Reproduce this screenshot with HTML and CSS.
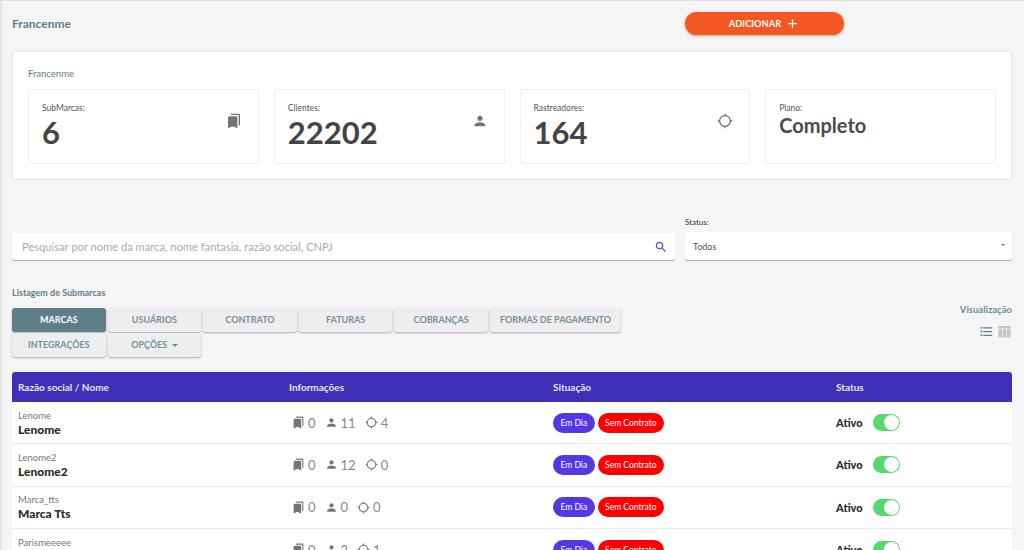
FILE: index.html
```html
<!DOCTYPE html>
<html lang="pt-BR">
<head>
	<meta charset="utf-8"/>
	<title>Francenme</title>
	<link rel="stylesheet" href="styles.css">
</head>
<body>
<svg class="defs" width="0" height="0">
	<symbol id="i-marcas" viewBox="0 0 24 24"><path d="M19 18l2 1V3c0-1.1-.9-2-2-2H8.99C7.89 1 7 1.9 7 3h10c1.1 0 2 .9 2 2v13zM15 5H5c-1.1 0-2 .9-2 2v16l7-3 7 3V7c0-1.1-.9-2-2-2z"/></symbol>
	<symbol id="i-user" viewBox="0 0 24 24"><path d="M12 12c2.21 0 4-1.79 4-4s-1.79-4-4-4-4 1.79-4 4 1.79 4 4 4zm0 2c-2.67 0-8 1.34-8 4v2h16v-2c0-2.66-5.33-4-8-4z"/></symbol>
	<symbol id="i-gps" viewBox="0 0 24 24"><path d="M20.94 11c-.46-4.17-3.77-7.48-7.94-7.94V1h-2v2.06C6.83 3.52 3.52 6.83 3.06 11H1v2h2.06c.46 4.17 3.77 7.48 7.94 7.94V23h2v-2.06c4.17-.46 7.48-3.77 7.94-7.94H23v-2h-2.06zM12 19c-3.87 0-7-3.13-7-7s3.13-7 7-7 7 3.13 7 7-3.13 7-7 7z"/></symbol>
</svg>

<header class="top">
	<h1 class="top__title">Francenme</h1>
	<a class="add-btn" href="#">ADICIONAR
		<svg class="add-btn__icon" viewBox="0 0 24 24"><path d="M19 13h-6v6h-2v-6H5v-2h6V5h2v6h6v2z"/></svg>
	</a>
</header>

<section class="summary">
	<h2 class="summary__title">Francenme</h2>
	<div class="stats">
		<div class="stat">
			<div>
				<div class="stat__label">SubMarcas:</div>
				<div class="stat__value">6</div>
			</div>
			<svg class="stat__icon"><use href="#i-marcas"/></svg>
		</div>
		<div class="stat">
			<div>
				<div class="stat__label">Clientes:</div>
				<div class="stat__value">22202</div>
			</div>
			<svg class="stat__icon"><use href="#i-user"/></svg>
		</div>
		<div class="stat">
			<div>
				<div class="stat__label">Rastreadores:</div>
				<div class="stat__value">164</div>
			</div>
			<svg class="stat__icon"><use href="#i-gps"/></svg>
		</div>
		<div class="stat">
			<div>
				<div class="stat__label">Plano:</div>
				<div class="stat__plan">Completo</div>
			</div>
		</div>
	</div>
</section>

<section class="filters">
	<div class="search">
		<span class="search__text">Pesquisar por nome da marca, nome fantasia, razão social, CNPJ</span>
		<svg class="search__icon" viewBox="0 0 24 24"><path d="M15.5 14h-.79l-.28-.27C15.41 12.59 16 11.11 16 9.5 16 5.91 13.09 3 9.5 3S3 5.91 3 9.5 5.91 16 9.5 16c1.61 0 3.09-.59 4.23-1.57l.27.28v.79l5 4.99L20.49 19l-4.99-5zm-6 0C7.01 14 5 11.99 5 9.5S7.01 5 9.5 5 14 7.01 14 9.5 11.99 14 9.5 14z"/></svg>
	</div>
	<div class="status-filter">
		<label class="status-filter__label">Status:</label>
		<div class="select">
			<span>Todos</span>
			<i class="select__caret"></i>
		</div>
	</div>
</section>

<section class="listing">
	<h3 class="listing__title">Listagem de Submarcas</h3>
	<div class="listing__bar">
		<nav class="tabs">
			<a class="tab tab_active" href="#">MARCAS</a>
			<a class="tab" href="#">USUÁRIOS</a>
			<a class="tab" href="#">CONTRATO</a>
			<a class="tab" href="#">FATURAS</a>
			<a class="tab" href="#">COBRANÇAS</a>
			<a class="tab tab_wide" href="#">FORMAS DE PAGAMENTO</a>
			<a class="tab" href="#">INTEGRAÇÕES</a>
			<a class="tab" href="#">OPÇÕES <i class="tab__caret"></i></a>
		</nav>
		<div class="view">
			<div class="view__title">Visualização</div>
			<div class="view__icons">
				<svg class="view__icon" viewBox="0 0 24 24"><path d="M4 10.5c-.83 0-1.5.67-1.5 1.5s.67 1.5 1.5 1.5 1.5-.67 1.5-1.5-.67-1.5-1.5-1.5zm0-6c-.83 0-1.5.67-1.5 1.5S3.17 7.5 4 7.5 5.5 6.83 5.5 6 4.83 4.5 4 4.5zm0 12c-.83 0-1.5.68-1.5 1.5s.68 1.5 1.5 1.5 1.5-.68 1.5-1.5-.67-1.5-1.5-1.5zM7 19h14v-2H7v2zm0-6h14v-2H7v2zm0-8v2h14V5H7z"/></svg>
				<svg class="view__icon view__icon_off" viewBox="0 0 24 24"><path d="M2 3h20v4H2zM2 8.500h6V21H2zM9 8.500h6V21H9zM16 8.500h6V21h-6z"/></svg>
			</div>
		</div>
	</div>

	<div class="table">
		<div class="table__head">
			<div>Razão social / Nome</div>
			<div>Informações</div>
			<div>Situação</div>
			<div>Status</div>
		</div>

		<div class="table__row">
			<div>
				<div class="row-sub">Lenome</div>
				<div class="row-name">Lenome</div>
			</div>
			<div class="info">
				<svg class="info__icon"><use href="#i-marcas"/></svg><span class="info__num">0</span>
				<svg class="info__icon info__icon_user"><use href="#i-user"/></svg><span class="info__num">11</span>
				<svg class="info__icon info__icon_gps"><use href="#i-gps"/></svg><span class="info__num">4</span>
			</div>
			<div class="badges"><span class="badge badge_blue">Em Dia</span><span class="badge badge_red">Sem Contrato</span></div>
			<div class="state"><strong class="state__text">Ativo</strong><span class="switch"><i class="switch__knob"></i></span></div>
		</div>

		<div class="table__row">
			<div>
				<div class="row-sub">Lenome2</div>
				<div class="row-name">Lenome2</div>
			</div>
			<div class="info">
				<svg class="info__icon"><use href="#i-marcas"/></svg><span class="info__num">0</span>
				<svg class="info__icon info__icon_user"><use href="#i-user"/></svg><span class="info__num">12</span>
				<svg class="info__icon info__icon_gps"><use href="#i-gps"/></svg><span class="info__num">0</span>
			</div>
			<div class="badges"><span class="badge badge_blue">Em Dia</span><span class="badge badge_red">Sem Contrato</span></div>
			<div class="state"><strong class="state__text">Ativo</strong><span class="switch"><i class="switch__knob"></i></span></div>
		</div>

		<div class="table__row">
			<div>
				<div class="row-sub">Marca_tts</div>
				<div class="row-name">Marca Tts</div>
			</div>
			<div class="info">
				<svg class="info__icon"><use href="#i-marcas"/></svg><span class="info__num">0</span>
				<svg class="info__icon info__icon_user"><use href="#i-user"/></svg><span class="info__num">0</span>
				<svg class="info__icon info__icon_gps"><use href="#i-gps"/></svg><span class="info__num">0</span>
			</div>
			<div class="badges"><span class="badge badge_blue">Em Dia</span><span class="badge badge_red">Sem Contrato</span></div>
			<div class="state"><strong class="state__text">Ativo</strong><span class="switch"><i class="switch__knob"></i></span></div>
		</div>

		<div class="table__row">
			<div>
				<div class="row-sub">Parismeeeee</div>
				<div class="row-name">Parismeeeee</div>
			</div>
			<div class="info">
				<svg class="info__icon"><use href="#i-marcas"/></svg><span class="info__num">0</span>
				<svg class="info__icon info__icon_user"><use href="#i-user"/></svg><span class="info__num">2</span>
				<svg class="info__icon info__icon_gps"><use href="#i-gps"/></svg><span class="info__num">1</span>
			</div>
			<div class="badges"><span class="badge badge_blue">Em Dia</span><span class="badge badge_red">Sem Contrato</span></div>
			<div class="state"><strong class="state__text">Ativo</strong><span class="switch"><i class="switch__knob"></i></span></div>
		</div>
	</div>
</section>
</body>
</html>
```

FILE: styles.css
```css
/* pagina */
html,body{
	height: 100%;
	overflow: hidden;
}
body{
	margin: 0;
	padding: 0 12px 0 10px;
	background: #f5f5f5;
	border-top: 1px solid #e2e2e2;
	border-left: 2px solid #e6e6e6;
	font-family: "Lato", "Open Sans", sans-serif;
	color: #444;
}
h1,h2,h3{
	margin: 0;
}
a{
	text-decoration: none;
}
.defs{
	position: absolute;
}

/* topo */
.top{
	display: flex;
	align-items: center;
	height: 23px;
	padding-top: 11px;
}
.top__title{
	flex: 0 0 673px;
	font-size: 12px;
	font-weight: 700;
	color: #5f7d8a;
}
.add-btn{
	display: flex;
	align-items: center;
	justify-content: center;
	gap: 4px;
	width: 159px;
	height: 23px;
	border-radius: 12px;
	background: #f55722;
	color: #fff;
	font-size: 9.3px;
	font-weight: 700;
	box-shadow: 0 1px 3px rgba(0,0,0,.3);
}
.add-btn__icon{
	width: 15px;
	height: 15px;
	fill: #fff;
}

/* resumo */
.summary{
	box-sizing: border-box;
	margin-top: 16px;
	height: 129px;
	padding: 16px 15px 0;
	background: #fff;
	border: 1px solid #e8e8e8;
	border-radius: 2px;
}
.summary__title{
	font-size: 9.5px;
	font-weight: 400;
	line-height: 12px;
	color: #5f7d8a;
}
.stats{
	display: flex;
	gap: 15px;
	margin-top: 9px;
}
.stat{
	display: flex;
	justify-content: space-between;
	flex: 1;
	box-sizing: border-box;
	height: 75px;
	padding: 13px 16px 0 13px;
	border: 1px solid #efefef;
	border-radius: 2px;
}
.stat__label{
	font-size: 8.5px;
	line-height: 10px;
	color: #555;
}
.stat__value{
	font-size: 31px;
	font-weight: 700;
	line-height: 38px;
	color: #444;
}
.stat__plan{
	font-size: 20px;
	font-weight: 700;
	line-height: 24px;
	color: #4a4a4a;
}
.stat__icon{
	width: 16px;
	height: 16px;
	margin-top: 10px;
	fill: #757575;
}

/* filtros */
.filters{
	display: flex;
	align-items: flex-end;
	gap: 10px;
	margin-top: 37px;
}
.search{
	display: flex;
	align-items: center;
	justify-content: space-between;
	flex: 0 0 663px;
	box-sizing: border-box;
	height: 27px;
	padding: 0 7px 0 10px;
	background: #fff;
	border-radius: 2px;
	box-shadow: 0 1px 1px rgba(0,0,0,.3);
	font-size: 11.15px;
	color: #aaa;
}
.search__icon{
	width: 14px;
	height: 14px;
	fill: #5b3fe0;
}
.status-filter{
	flex: 1;
}
.status-filter__label{
	display: block;
	margin-bottom: 5px;
	font-size: 8px;
	line-height: 10px;
	color: #333;
}
.select{
	display: flex;
	align-items: center;
	justify-content: space-between;
	height: 28px;
	padding: 0 7px 0 8px;
	background: #fff;
	border-radius: 2px;
	box-shadow: 0 1px 1px rgba(0,0,0,.3);
	font-size: 9px;
	color: #555;
}
.select__caret{
	margin-bottom: 3px;
	border: 2px solid transparent;
	border-top: 2px solid #777;
	border-bottom: 0;
}

/* listagem */
.listing{
	margin-top: 27px;
}
.listing__title{
	font-size: 9px;
	font-weight: 700;
	line-height: 11px;
	color: #5f7d8a;
}
.listing__bar{
	display: flex;
	justify-content: space-between;
	margin-top: 10px;
	height: 64px;
}
.tabs{
	display: flex;
	flex-wrap: wrap;
	align-content: flex-start;
	gap: 1px 2px;
	width: 620px;
}
.tab{
	box-sizing: border-box;
	flex: 0 0 93.6px;
	height: 24px;
	line-height: 23px;
	text-align: center;
	background: #eee;
	border-radius: 3px;
	box-shadow: 0 1px 2px rgba(0,0,0,.3);
	font-size: 9px;
	font-weight: 700;
	color: #76909b;
}
.tab_active{
	background: #5f7d8a;
	color: #fff;
}
.tab_wide{
	flex-basis: 131px;
}
.tab__caret{
	display: inline-block;
	margin: 0 0 1px 2px;
	border: 3px solid transparent;
	border-top: 3px solid #6f8791;
	border-bottom: 0;
}
.view{
	margin-top: -4px;
	text-align: right;
}
.view__title{
	font-size: 9.5px;
	font-weight: 700;
	line-height: 12px;
	color: #6f8f9e;
}
.view__icons{
	display: flex;
	justify-content: flex-end;
	gap: 3px;
	margin-top: 8px;
}
.view__icon{
	width: 15px;
	height: 15px;
	fill: #5f7d8a;
}
.view__icon_off{
	fill: #c4c4c4;
}

/* tabela */
.table{
	background: #fff;
}
.table__head,
.table__row{
	display: grid;
	grid-template-columns: 271px 264px 283px 1fr;
	align-items: center;
}
.table__head{
	height: 30px;
	background: #3f2eb8;
	border-radius: 3px 3px 0 0;
	font-size: 10px;
	font-weight: 700;
	color: #e9e6fa;
}
.table__head > div,
.table__row > div{
	padding-left: 6px;
}
.table__row{
	box-sizing: border-box;
	height: 42.33px;
	border-bottom: 1px solid #eaeaea;
}
.row-sub{
	font-size: 9.5px;
	line-height: 13px;
	color: #777;
}
.row-name{
	font-size: 12px;
	font-weight: 900;
	line-height: 15px;
	color: #2b2b2b;
}
.info{
	display: flex;
	align-items: center;
}
.info__icon{
	width: 13px;
	height: 13px;
	margin-left: 3px;
	fill: #757575;
}
.info__icon_user{
	margin-left: 9px;
}
.info__icon_gps{
	margin-left: 9px;
}
.info__num{
	margin-left: 3px;
	font-size: 13px;
	color: #888;
}
.badges{
	display: flex;
	gap: 3px;
}
.badge{
	height: 20px;
	padding: 0 7.5px;
	border-radius: 10px;
	font-size: 8.5px;
	line-height: 20px;
	color: #fff;
}
.badge_blue{
	background: #5438e4;
}
.badge_red{
	background: #ff0000;
}
.state{
	display: flex;
	align-items: center;
	gap: 10px;
}
.state__text{
	font-size: 11px;
	font-weight: 900;
	color: #2b2b2b;
}
.switch{
	display: flex;
	justify-content: flex-end;
	box-sizing: border-box;
	width: 27px;
	height: 17px;
	padding: 1px;
	background: #55d96f;
	border-radius: 9px;
}
.switch__knob{
	width: 15px;
	height: 15px;
	background: #fff;
	border-radius: 50%;
}
```
